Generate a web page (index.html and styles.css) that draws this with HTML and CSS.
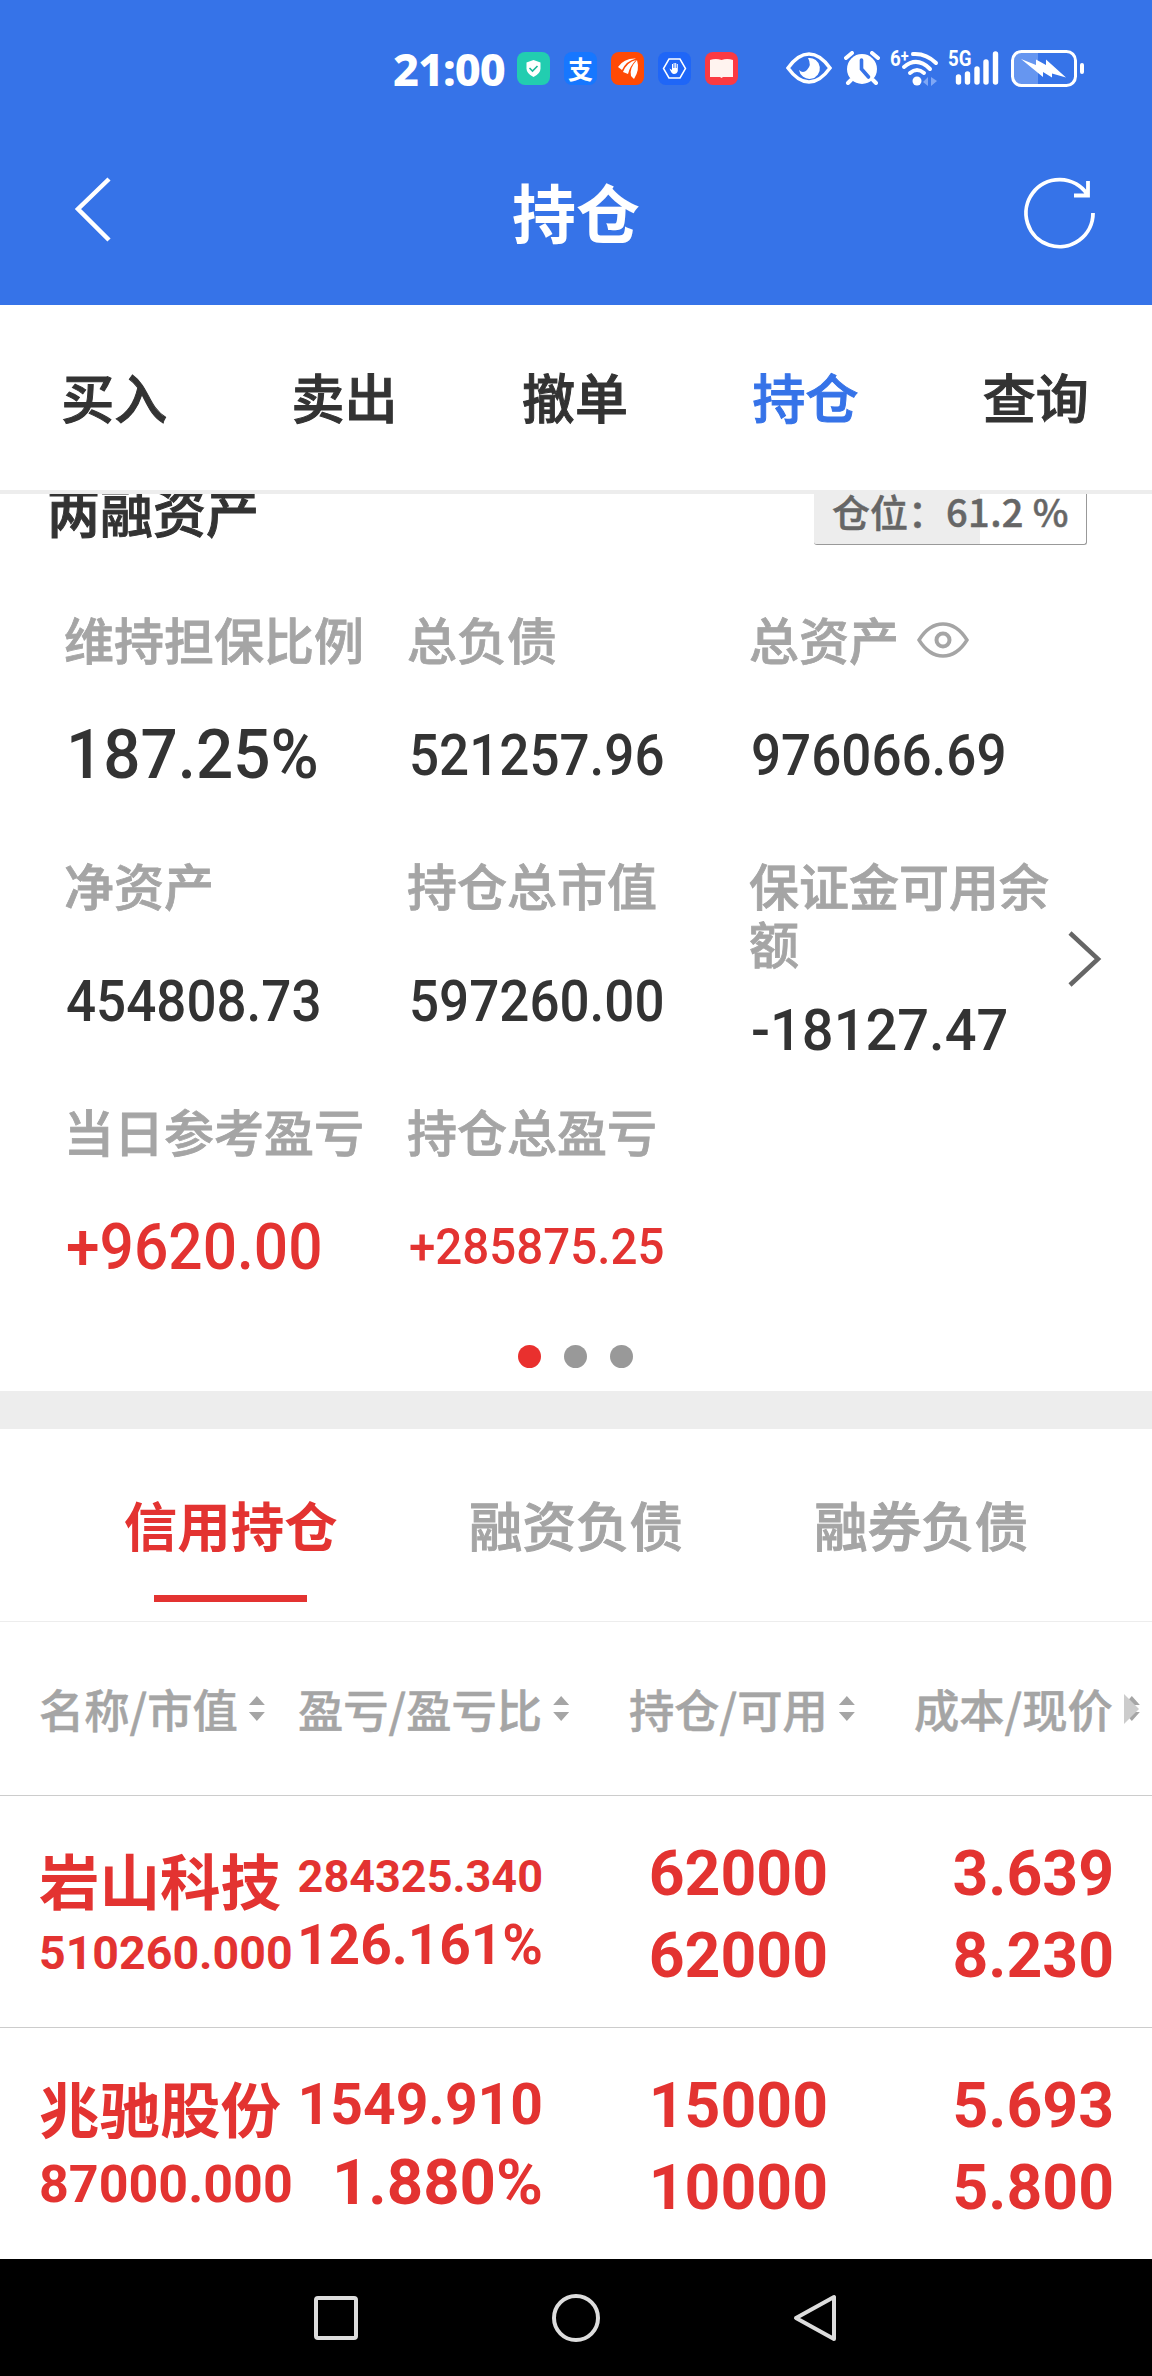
FILE: index.html
```
<!DOCTYPE html>
<html lang="zh-CN">
<head>
	<meta charset="UTF-8">
	<title>持仓</title>
	<link rel="stylesheet" href="styles.css">
</head>
<body>
	<!-- 状态栏 -->
	<div class="status">
		<span class="time">21:00</span>
		<svg class="app" viewBox="0 0 33 33"><rect width="33" height="33" rx="8" fill="#22cdb0"/><path d="M16.500 8l7 2.500v6q0 5-7 8.500q-7-3.500-7-8.500v-6z" fill="#fff"/><path d="M12.500 16l3 3 5-5" fill="none" stroke="#1bb89b" stroke-width="1.600"/></svg>
		<span class="app pay">支</span>
		<svg class="app" viewBox="0 0 33 33"><rect width="33" height="33" rx="8" fill="#ff4a05"/><path d="M7 15Q13 6 25 6.500Q15 9 11 18zM12 20Q16 10 25 8Q19 14 17 22zM20 24Q18 16 26 8Q29 18 23 27z" fill="#fff"/></svg>
		<svg class="app" viewBox="0 0 33 33"><rect width="33" height="33" rx="8" fill="#1f66f7"/><path d="M11 7h11l5.500 9.500L22 26H11l-5.500-9.500z" fill="none" stroke="#fff" stroke-width="1.500"/><path d="M11.500 16.500l2.500 1.500v-6h1v4h.6v-5h1v5h.6v-5h1v5h.6v-4h1v7q-.8 3-3.800 3q-2.500 0-4.500-5.500z" fill="#fff"/></svg>
		<svg class="app" viewBox="0 0 33 33"><rect width="33" height="33" rx="8" fill="#fb3a42"/><path d="M5 8q6-2 11.500 0q5.500-2 11.500 0v17H18l-1.500 1-1.500-1H5z" fill="#fff3ef"/></svg>
		<svg class="sys eye" viewBox="0 0 46 32"><path d="M2 16Q12 2 23 2t21 14Q34 30 23 30T2 16z" fill="none" stroke="#fff" stroke-width="3.500"/><path d="M22 6a10.500 10.500 0 1 1-9 12q4 4 8 0q5-5 1-12z" fill="#fff"/></svg>
		<svg class="sys alarm" viewBox="0 0 36 34"><circle cx="18" cy="18" r="15" fill="#fff"/><path d="M2 7l6-5M34 7l-6-5M7 29l-3 3M29 29l3 3" stroke="#fff" stroke-width="4" stroke-linecap="round"/><path d="M17.500 9v9l7 8" fill="none" stroke="#3673e8" stroke-width="3.600" stroke-linecap="round"/></svg>
		<span class="sup six">6<i>+</i></span>
		<svg class="sys wifi" viewBox="0 0 40 36"><g fill="none" stroke="#fff" stroke-width="4" stroke-linecap="round"><path d="M13 4Q26 3 36 13"/><path d="M4 17q13-11 26 2"/><path d="M10 23q7-6 14 0"/></g><circle cx="17" cy="31" r="4.500" fill="#fff"/><path d="M28 27v9l-5-4zM31 27v9l6-5z" fill="#80a8f5"/></svg>
		<span class="sup five">5G</span>
		<svg class="sys signal" viewBox="0 0 44 34"><path d="M3.500 26v5M12.500 23v8M22 18v13M31 11v20M40.500 3v28" stroke="#fff" stroke-width="5.400" stroke-linecap="round"/></svg>
		<svg class="sys battery" viewBox="0 0 74 37"><rect x="3" y="3" width="24" height="31" fill="#6696f0"/><rect x="1.500" y="1.500" width="63" height="34" rx="9" fill="none" stroke="#fff" stroke-width="3"/><rect x="69" y="13" width="4" height="11" rx="2" fill="#fff"/><path d="M10 9l15 6V9.500l10 5.500V9.500l20 18-14-4v4l-9-5.500v5z" fill="#fff"/></svg>
	</div>

	<div class="title">
		<svg class="back" viewBox="0 0 40 68"><path d="M36 3L5 33l31 31" fill="none" stroke="#fff" stroke-width="4.500"/></svg>
		<h1>持仓</h1>
		<svg class="refresh" viewBox="0 0 74 76"><path d="M70 38A33.500 33.500 0 1 1 64 19M51 20.500h14V6" fill="none" stroke="#fff" stroke-width="3.800"/></svg>
	</div>

	<div class="menu">
		<a>买入</a><a>卖出</a><a>撤单</a><a class="on">持仓</a><a>查询</a>
	</div>

	<div class="asset">
		<div class="asset-head">
			<h2>两融资产</h2>
			<div class="ratio">仓位：<span>61.2 %</span></div>
		</div>
		<div class="grid">
			<div class="cell"><label>维持担保比例</label><b class="num big">187.25%</b></div>
			<div class="cell"><label>总负债</label><b class="num">521257.96</b></div>
			<div class="cell"><label>总资产<svg class="look" viewBox="0 0 52 36"><path d="M2 18Q12 2 26 2t24 16Q40 34 26 34T2 18z" fill="none" stroke="#a5a5a5" stroke-width="3.400"/><circle cx="26" cy="18" r="6.500" fill="none" stroke="#a5a5a5" stroke-width="4"/></svg></label><b class="num">976066.69</b></div>
			<div class="cell"><label>净资产</label><b class="num">454808.73</b></div>
			<div class="cell"><label>持仓总市值</label><b class="num">597260.00</b></div>
			<div class="cell"><label>保证金可用余额</label><b class="num neg">-18127.47</b></div>
			<div class="cell"><label>当日参考盈亏</label><b class="num mid red">+9620.00</b></div>
			<div class="cell"><label>持仓总盈亏</label><b class="num small red">+285875.25</b></div>
			<svg class="more" viewBox="0 0 36 56"><path d="M3 2l28 26L3 54" fill="none" stroke="#666" stroke-width="4.500"/></svg>
		</div>
		<div class="dots"><i class="on"></i><i></i><i></i></div>
	</div>

	<div class="tabs">
		<a class="on">信用持仓</a><a>融资负债</a><a>融券负债</a>
	</div>

	<!-- 持仓列表 -->
	<div class="row thead">
		<span>名称/市值<i class="sort"></i></span>
		<span>盈亏/盈亏比<i class="sort"></i></span>
		<span>持仓/可用<i class="sort"></i></span>
		<span>成本/现价<i class="sort"></i><i class="next"></i></span>
	</div>
	<div class="row stock">
		<div class="name"><b>岩山科技</b><b class="n42">510260.000</b></div>
		<div class="profit"><b class="n41">284325.340</b><b class="n50">126.161%</b></div>
		<div class="hold"><b>62000</b><b>62000</b></div>
		<div class="price"><b>3.639</b><b>8.230</b></div>
	</div>
	<div class="row stock">
		<div class="name"><b>兆驰股份</b><b class="n46">87000.000</b></div>
		<div class="profit"><b class="n51">1549.910</b><b class="n56">1.880%</b></div>
		<div class="hold"><b>15000</b><b>10000</b></div>
		<div class="price"><b>5.693</b><b>5.800</b></div>
	</div>

	<div class="nav">
		<svg viewBox="0 0 48 48"><rect x="4" y="4" width="40" height="40" rx="2"/></svg>
		<svg viewBox="0 0 48 48"><circle cx="24" cy="24" r="22"/></svg>
		<svg viewBox="0 0 48 48"><path d="M42 3v42L4 24z"/></svg>
	</div>
</body>
</html>
```
FILE: styles.css
```
*{ margin: 0; padding: 0; box-sizing: border-box;}
body{ width: 1152px; height: 2376px; overflow: hidden; background: #fff; color: #333; font-family: "Noto Sans CJK SC", sans-serif; font-weight: 500;}
i{ font-style: normal;}
svg{ display: block; flex: none;}

.status{ height: 136px; padding-left: 393px; display: flex; align-items: center; background: #3673e8; color: #fff;}
.time{ width: 124px; font: 800 45px/1 "Noto Sans", sans-serif; letter-spacing: -1px; white-space: nowrap;}
.app{ width: 33px; height: 33px; margin-right: 14px;}
.pay{ border-radius: 8px; background: #1677ff; font-size: 25px; line-height: 32px; text-align: center; font-weight: bold;}
.eye{ width: 46px; height: 32px; margin-left: 34px;}
.alarm{ width: 36px; height: 34px; margin-left: 12px;}
.sup{ height: 36px; font: bold 22px/18px Roboto, sans-serif; white-space: nowrap; transform: scaleX(.85); transform-origin: 0 0;}
.six{ width: 16px; margin-left: 10px;}
.six i{ position: relative; top: -4px; font-size: 17px;}
.wifi{ width: 40px; height: 36px; margin-left: -6px;}
.five{ width: 17px; margin-left: 8px;}
.signal{ width: 44px; height: 34px; margin-left: -10px;}
.battery{ width: 74px; height: 37px; margin-left: 12px;}

.title{ height: 169px; padding: 0 55px 0 73px; display: flex; justify-content: space-between; background: #3673e8; color: #fff;}
.title h1{ margin-left: 16px; font-size: 64px; line-height: 149px; font-weight: bold;}
.back{ width: 40px; height: 68px; margin-top: 40px;}
.refresh{ width: 74px; height: 76px; margin-top: 39px;}

.menu{ height: 189px; display: flex; border-bottom: 4px solid #ededed;}
.menu a{ flex: 1; text-align: center; font-size: 53px; line-height: 183px; text-indent: -2px; -webkit-text-stroke: 1px;}
.menu .on{ color: #3673e8;}

.asset{ height: 935px; overflow: hidden; border-bottom: 38px solid #ededed;}
.asset .asset-head{ height: 51px; padding: 0 65px 0 47px; display: flex; justify-content: space-between;}
.asset-head h2{ margin-top: -24px; font-size: 53px; line-height: 80px; font-weight: 500; -webkit-text-stroke: 1px;}
.ratio{ width: 273px; height: 51px; padding-left: 18px; border: 1px solid #999; border-width: 0 1px 1px 0; border-radius: 0 0 3px 3px; background: linear-gradient(90deg, #ededed 166px, #fff 166px); color: #666; font-size: 38px; line-height: 34px; white-space: nowrap; -webkit-text-stroke: .5px;}
.ratio span{ letter-spacing: .4px;}
.grid{ position: relative; display: grid; grid-template-columns: 343px 342px 310px; grid-auto-rows: 246px; padding: 64px 0 0 66px;}
.cell{ display: flex; flex-direction: column;}
.cell label{ display: flex; align-items: center; min-height: 58px; margin-left: -2px; font-size: 50px; line-height: 58px; color: #a5a5a5; -webkit-text-stroke: .8px;}
.look{ width: 52px; height: 36px; margin: 4px 0 0 18px;}
.num{ margin-top: 52px; font: 500 58px/72px Roboto, sans-serif; transform: scaleX(.913); transform-origin: 0 0; white-space: nowrap;}
.neg{ margin-top: 23px; transform: scaleX(.965);}
.big{ font-size: 69px; transform: scaleX(.95);}
.mid{ font-size: 65px; transform: scaleX(.93);}
.small{ font-size: 50px; transform: scaleX(.95);}
.red{ color: #e33331;}
.more{ position: absolute; left: 1067px; top: 386px; width: 36px; height: 56px;}
.dots{ display: flex; justify-content: center; gap: 23px; margin: -2px 2px 0 0;}
.dots i{ width: 23px; height: 23px; border-radius: 50%; background: #999;}
.dots .on{ background: #e9302e;}

.tabs{ height: 193px; padding: 0 58px; display: flex; border-bottom: 1px solid #ededed;}
.tabs a{ flex: 1; display: flex; flex-direction: column; align-items: center; font-size: 53.5px; line-height: 189px; color: #a5a5a5; -webkit-text-stroke: 1px;}
.tabs .on{ color: #e33331; font-weight: bold; -webkit-text-stroke: 0;}
.tabs .on:after{ content: ''; width: 153px; height: 7px; margin-top: -23px; background: #e33331;}

.row{ display: flex; border-bottom: 1px solid #ccc;}
.thead{ height: 174px; padding-left: 39px; font-size: 45.3px; line-height: 171px; color: #a5a5a5; white-space: nowrap; -webkit-text-stroke: .5px;}
.thead span{ display: flex; align-items: center; height: 173px;}
.thead span:nth-child(1){ width: 259px;}
.thead span:nth-child(2){ width: 331px;}
.thead span:nth-child(3){ width: 285px;}
.sort{ width: 16px; height: 25px; margin-left: 11px; background: #a5a5a5; clip-path: polygon(50% 0, 100% 36%, 0 36%, 0 64%, 100% 64%, 50% 100%, 0 64%, 0 36%);}
.next{ z-index: 1; margin-left: -16px; border: 15px solid transparent; border-left-color: #ccc; border-right: 0;}

.stock{ height: 232px; padding-left: 39px; color: #e33331; white-space: nowrap;}
.stock:nth-last-child(2){ height: 231px; border: 0;}
.stock b{ display: block; font: bold 62.5px/82px Roboto, sans-serif;}
.name{ width: 258px; padding-top: 46px;}
.stock .name b:first-child{ font: bold 60.5px/74px "Noto Sans CJK SC", sans-serif;}
.stock:nth-last-child(2) .name{ padding-top: 42px;}
.profit{ width: 246px; padding-top: 43px; text-align: right;}
.hold{ width: 285px; padding-top: 37px; text-align: right;}
.price{ width: 286px; padding-top: 37px; text-align: right;}
.stock .n41{ font-size: 45px; line-height: 76px;}
.stock .n42{ font-size: 46.500px; line-height: 75px;}
.stock .n46{ font-size: 52px; line-height: 82px;}
.stock .n50{ font-size: 55px; line-height: 60px;}
.stock .n51{ font-size: 57px; line-height: 68px;}
.stock .n56{ font-size: 63.5px; line-height: 88px;}

.nav{ height: 117px; display: flex; justify-content: center; align-items: center; gap: 192px; background: #000;}
.nav svg{ width: 48px; height: 48px; fill: none; stroke: #ddd; stroke-width: 4; stroke-linejoin: round;}
```
